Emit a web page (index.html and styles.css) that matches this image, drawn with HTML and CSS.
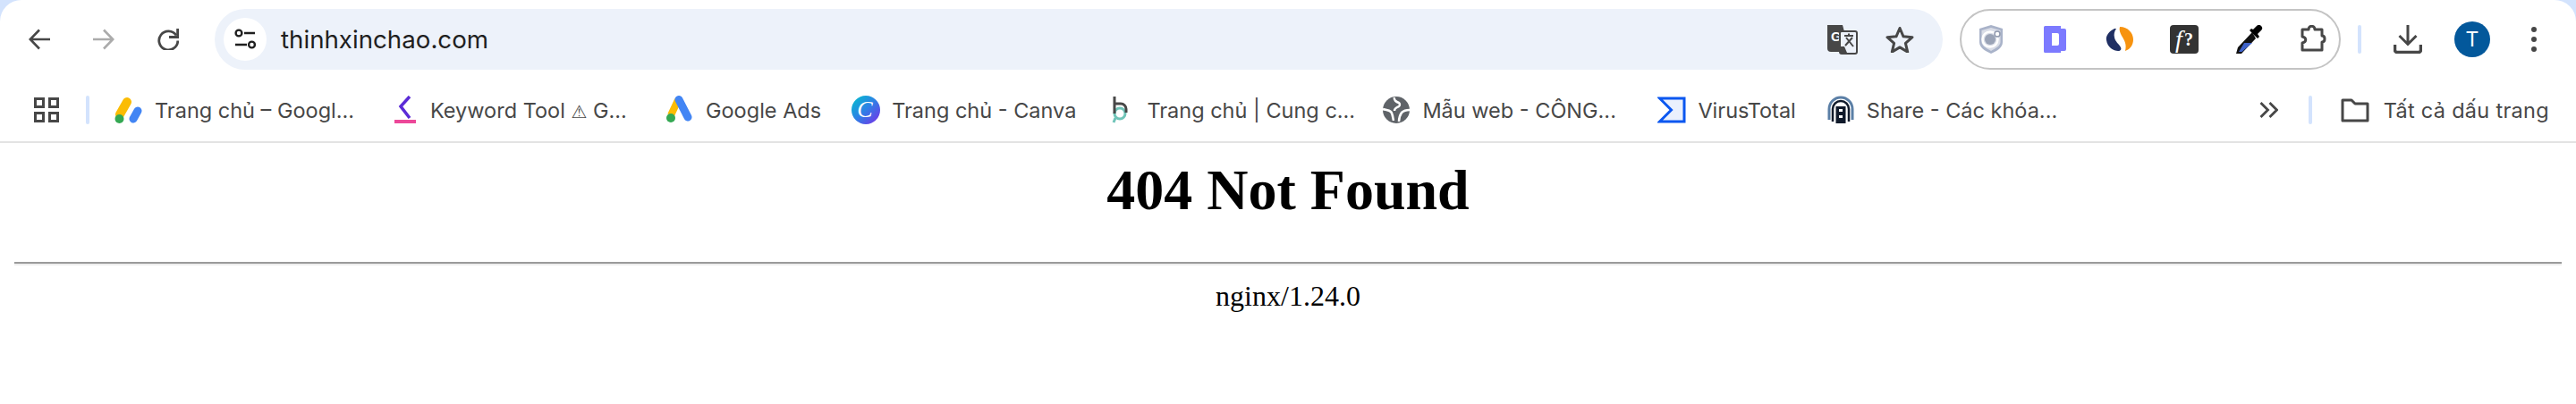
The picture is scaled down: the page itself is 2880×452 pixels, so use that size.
FILE: index.html
```html
<!DOCTYPE html>
<html>
<head>
    <title>404 Not Found</title>
    <link rel="stylesheet" href="styles.css">
</head>
<body>
    <div class="chrome">
        <div class="toolbar">
            <div class="nav-btn">
                <svg width="24" height="24" viewBox="0 0 24 24" fill="none" stroke="#474747" stroke-width="2.6"><path d="M24 12H2M12 1.5 1.8 12 12 22.5"/></svg>
            </div>
            <div class="nav-btn">
                <svg width="24" height="24" viewBox="0 0 24 24" fill="none" stroke="#ababab" stroke-width="2.6"><path d="M0 12h22M12 1.5 22.2 12 12 22.5"/></svg>
            </div>
            <div class="nav-btn">
                <svg width="24" height="24" viewBox="0 0 24 24" fill="none" stroke="#474747" stroke-width="2.8"><path d="M21 7.500A10.500 10.500 0 1 0 22.800 13.500"/><path d="M22.600 0v9.500H13"/></svg>
            </div>
            <div class="omnibox">
                <div class="site-info">
                    <svg width="24" height="24" viewBox="0 0 24 24" fill="none" stroke="#1f1f1f" stroke-width="2.4"><circle cx="5" cy="5" r="3.4"/><path d="M11 5h12M1 18h13"/><circle cx="19.500" cy="18" r="3.4"/></svg>
                </div>
                <span class="url">thinhxinchao.com</span>
                <svg class="translate" width="34" height="34" viewBox="0 0 34 34">
                    <path d="M2 2h17l8 30H6a4 4 0 0 1-4-4z" fill="#474747" transform="translate(-2 -1)"/>
                    <text x="4" y="19" class="translate-g">G</text>
                    <rect x="14" y="8" width="19" height="25" rx="2" fill="#edf2fa" stroke="#474747" stroke-width="2"/>
                    <path d="M15 32h7l-3-7h-6z" fill="#474747"/>
                    <path d="M19 13h10M24 10.500v3M20 24l8-9M21 15l8 10" fill="none" stroke="#474747" stroke-width="2"/>
                </svg>
                <svg width="32" height="30" viewBox="0 0 32 30" fill="none" stroke="#474747" stroke-width="3" stroke-linejoin="round"><path d="M16 2.500l4 9.300 10 .9-7.600 6.600 2.300 9.800L16 23.900l-8.700 5.200 2.300-9.800L2 12.700l10-.9z"/></svg>
            </div>
            <div class="ext-pill">
                <div class="ext">
                    <svg width="32" height="32" viewBox="0 0 32 32"><path d="M16 0 29 4v15c0 6-6 10-13 13C9 29 3 25 3 19V4z" fill="#a9b3c9"/><path d="M16 3 26.500 6v13c0 4-5 7-10.500 10C10.500 26 5.500 23 5.500 19V6z" fill="#d9dde7"/><circle cx="15" cy="16" r="8.500" fill="none" stroke="#fff" stroke-width="2.500"/><circle cx="15" cy="16" r="6" fill="#9aa3b6"/><circle cx="23" cy="10" r="3" fill="#fff" stroke="#8f98ad" stroke-width="1.500"/></svg>
                </div>
                <div class="ext">
                    <svg width="32" height="32" viewBox="0 0 32 32"><path d="M3 2.500A1.500 1.500 0 0 1 4.500 1H22v3h4a2 2 0 0 1 2 2v21a2 2 0 0 1-2 2h-4v2H4.500A1.500 1.500 0 0 1 3 29.500z" fill="#7c7aff"/><path d="M12 9h6a2 2 0 0 1 2 2v10a2 2 0 0 1-2 2h-6z" fill="#fff"/></svg>
                </div>
                <div class="ext">
                    <svg width="32" height="32" viewBox="0 0 32 32"><path d="M10 4C4 7 0 12 1 17c1 8 8 12 13 12 3 0 4-2 3-4-2-4-6-6-7-11-1-4 0-7 2-10z" fill="#1f2f63"/><path d="M16 2c-1 3 0 6 2 10 3 5 6 9 4 17 6-2 9-7 9-13 0-7-6-14-15-14z" fill="#f7930f"/></svg>
                </div>
                <div class="ext">
                    <div class="formula"><span class="formula-f">f</span><span class="formula-q">?</span></div>
                </div>
                <div class="ext">
                    <svg width="32" height="32" viewBox="0 0 32 32"><path d="M20 8 4 25l-2 7h6l16-17z" fill="#111"/><path d="M11 20h9L8.500 30H5z" fill="#3f63c9"/><path d="M17 6l9 9 2-2-2-3 4-4a3.500 3.500 0 0 0-5-5l-4 4-2-1z" fill="#000"/></svg>
                </div>
                <div class="ext">
                    <svg width="32" height="32" viewBox="0 0 32 32" fill="none" stroke="#474747" stroke-width="3" stroke-linejoin="round"><path d="M4 5h7c0-5 7-5 7 0h8v7c4 0 4 7 0 7v9H4v-8c5-1 5-6 0-7z"/></svg>
                </div>
            </div>
            <div class="bar-sep"></div>
            <svg class="download" width="32" height="32" viewBox="0 0 32 32" fill="none" stroke="#474747" stroke-width="3"><path d="M16 0v21M6.500 12 16 21.500 25.500 12"/><path d="M1.500 22v6a2.500 2.500 0 0 0 2.500 2.500h24a2.500 2.500 0 0 0 2.500-2.500v-6" stroke-width="3.500"/></svg>
            <div class="avatar">T</div>
            <div class="dots"><span></span><span></span><span></span></div>
        </div>

        <div class="bookmarks">
            <svg class="apps" width="28" height="28" viewBox="0 0 28 28" fill="none" stroke="#474747" stroke-width="3"><rect x="1.500" y="1.500" width="9" height="9"/><rect x="17.500" y="1.500" width="9" height="9"/><rect x="1.500" y="17.500" width="9" height="9"/><rect x="17.500" y="17.500" width="9" height="9"/></svg>
            <div class="bar-sep bar-sep-left"></div>
            <div class="bm bm-cut">
                <svg width="32" height="32" viewBox="0 0 32 32"><path d="M14 7 6 21" stroke="#fbbc04" stroke-width="10" stroke-linecap="round"/><path d="M26 17 21 26" stroke="#4285f4" stroke-width="9" stroke-linecap="round"/><circle cx="5.500" cy="26" r="5" fill="#34a853"/></svg>
                <span class="bm-text">Trang chủ – Googl...</span>
            </div>
            <div class="bm bm-cut">
                <svg width="32" height="32" viewBox="0 0 32 32"><path d="M22 1 12 12l10 13" fill="none" stroke="#5b2bd6" stroke-width="3.500"/><rect x="5" y="27" width="24" height="4" fill="#ec4899"/></svg>
                <span class="bm-text">Keyword Tool <span class="warn">⚠</span> G...</span>
            </div>
            <div class="bm">
                <svg width="32" height="32" viewBox="0 0 32 32"><path d="M14 5 6 22" stroke="#fbbc04" stroke-width="8"/><path d="M15 4.500 25 24" stroke="#4285f4" stroke-width="9" stroke-linecap="round"/><circle cx="6" cy="25" r="5" fill="#34a853"/></svg>
                <span class="bm-text">Google Ads</span>
            </div>
            <div class="bm">
                <svg width="32" height="32" viewBox="0 0 32 32"><defs><linearGradient id="canva" x1="0" y1="0" x2="1" y2="1"><stop offset="0" stop-color="#00c4cc"/><stop offset=".5" stop-color="#2f7fe6"/><stop offset="1" stop-color="#7d2ae8"/></linearGradient></defs><circle cx="16" cy="16" r="16" fill="url(#canva)"/><text x="15" y="24" class="canva-c">C</text></svg>
                <span class="bm-text">Trang chủ - Canva</span>
            </div>
            <div class="bm bm-cut">
                <svg width="32" height="32" viewBox="0 0 32 32"><circle cx="15" cy="20" r="6" fill="none" stroke="#6fc4b8" stroke-width="3"/><path d="M10 25l-2 5" stroke="#6fc4b8" stroke-width="3"/><path d="M9 1v19M9 9h7a6 6 0 0 1 6 6v4" fill="none" stroke="#474747" stroke-width="3"/></svg>
                <span class="bm-text">Trang chủ | Cung c...</span>
            </div>
            <div class="bm bm-cut">
                <svg width="32" height="32" viewBox="0 0 32 32"><circle cx="16" cy="16" r="15" fill="#5f6368"/><path d="M14 2c-1 3 2 5 5 6 2 2 1 4-2 5-2 1-3 2-3 4M1 15c3 1 7 1 9 3s2 6 3 10M31 16c-4 0-7 1-9 3-2 3-3 6-3 10" fill="none" stroke="#fff" stroke-width="2.500"/></svg>
                <span class="bm-text">Mẫu web - CÔNG...</span>
            </div>
            <div class="bm">
                <svg width="32" height="32" viewBox="0 0 32 32"><path d="M2.500 3H30v26H2.500L15.500 16z" fill="#eaf0fd" stroke="#0b57f0" stroke-width="3"/></svg>
                <span class="bm-text">VirusTotal</span>
            </div>
            <div class="bm bm-cut">
                <svg width="32" height="32" viewBox="0 0 32 32" fill="none"><path d="M3 27V15a13 13 0 0 1 26 0v12" stroke="#5b7fa6" stroke-width="3"/><path d="M7 29V15a9 9 0 0 1 18 0v14" stroke="#101a2b" stroke-width="2.500"/><rect x="10.500" y="12" width="11" height="19" fill="#101a2b"/><rect x="14" y="15" width="4" height="3" fill="#fff"/><rect x="14" y="22" width="4" height="3" fill="#fff"/></svg>
                <span class="bm-text">Share - Các khóa...</span>
            </div>
            <div class="bm-end">
                <svg class="more" width="21" height="18" viewBox="0 0 21 18" fill="none" stroke="#474747" stroke-width="2.800"><path d="M1.500 1l8 8-8 8M11.500 1l8 8-8 8"/></svg>
                <div class="bar-sep"></div>
                <svg width="32" height="32" viewBox="0 0 32 32" fill="none" stroke="#474747" stroke-width="3" stroke-linejoin="round"><path d="M2 5h10l4 4h14v19H2z"/></svg>
                <span class="bm-text">Tất cả dấu trang</span>
            </div>
        </div>
    </div>

    <div class="page">
        <h1>404 Not Found</h1>
        <hr>
        <p>nginx/1.24.0</p>
    </div>
</body>
</html>
```

FILE: styles.css
```css
body {
    margin: 0;
    background: #d3e3fd;
    height: 452px;
    overflow: hidden;
}

.chrome {
    background: #fff;
    border-radius: 24px 24px 0 0;
    border-bottom: 2px solid #e3e3e3;
    font-family: Inter, "Noto Sans", sans-serif;
    color: #474747;
}

.toolbar {
    display: flex;
    align-items: center;
    height: 88px;
    padding: 0 0 0 8px;
}

.nav-btn {
    width: 72px;
    display: flex;
    justify-content: center;
}

.omnibox {
    display: flex;
    align-items: center;
    width: 1932px;
    height: 68px;
    margin-left: 16px;
    padding: 0 32px 0 10px;
    box-sizing: border-box;
    background: #edf2fa;
    border-radius: 34px;
}

.site-info {
    display: flex;
    align-items: center;
    justify-content: center;
    width: 48px;
    height: 48px;
    background: #fff;
    border-radius: 50%;
}

.url {
    margin-left: 16px;
    font-size: 27.7px;
    color: #1f1f1f;
}

.translate {
    margin: 0 31px 0 auto;
}

.translate-g {
    font-family: "Liberation Sans", sans-serif;
    font-size: 15px;
    font-weight: bold;
    fill: #fff;
}

.ext-pill {
    display: flex;
    align-items: center;
    gap: 40px;
    width: 426px;
    height: 68px;
    margin-left: 19px;
    padding-left: 17px;
    box-sizing: border-box;
    border: 2px solid #c4c4c4;
    border-radius: 34px;
}

.ext {
    display: flex;
    width: 32px;
    height: 32px;
}

.formula {
    display: flex;
    align-items: center;
    justify-content: center;
    width: 32px;
    height: 32px;
    background: #333;
    border-radius: 4px;
    color: #fff;
    font-family: "Liberation Serif", serif;
    font-size: 28px;
}

.formula-f {
    font-style: italic;
}

.formula-q {
    font-size: 20px;
    font-weight: bold;
    margin-left: 2px;
}

.bar-sep {
    width: 4px;
    height: 32px;
    background: #d3e3fd;
    border-radius: 2px;
    margin-left: 19px;
}

.download {
    margin-left: 36px;
}

.avatar {
    width: 40px;
    height: 40px;
    margin-left: 36px;
    background: #03589b;
    border-radius: 50%;
    color: #fff;
    font-size: 23px;
    line-height: 40px;
    text-align: center;
}

.dots {
    display: flex;
    flex-direction: column;
    gap: 5px;
    margin-left: 46px;
}

.dots span {
    width: 6px;
    height: 6px;
    background: #474747;
    border-radius: 50%;
}

.bookmarks {
    display: flex;
    align-items: center;
    height: 70px;
    padding: 0 30px 0 38px;
}

.bar-sep-left {
    margin: 0 28px 0 30px;
}

.bm {
    display: flex;
    align-items: center;
    gap: 13px;
    padding-right: 34px;
    flex: none;
}

.bm-cut {
    width: 308px;
    padding-right: 0;
}

.bm-text {
    font-size: 23.5px;
    white-space: nowrap;
}

.warn {
    font-family: "DejaVu Sans", sans-serif;
    font-size: 20px;
}

.bm-end {
    display: flex;
    align-items: center;
    margin-left: auto;
}

.bm-end .bar-sep {
    margin: 0 32px 0 34px;
}

.bm-end .bm-text {
    margin-left: 16px;
    letter-spacing: 0.3px;
}

.page {
    background: #fff;
    height: 292px;
    padding: 16px 16px 0;
    box-sizing: border-box;
    font-family: "Liberation Serif", serif;
    color: #000;
    text-align: center;
}

.page h1 {
    margin: 0 0 43px;
    font-size: 64px;
}

.page hr {
    margin: 0;
    height: 0;
    border: 0;
    border-top: 2px solid #9a9a9a;
    border-bottom: 2px solid #eee;
}

.page p {
    margin: 16px 0 0;
    font-size: 32px;
}

.canva-c {
    font-family: "Liberation Serif", serif;
    font-style: italic;
    font-size: 26px;
    text-anchor: middle;
    fill: #fff;
}
```
